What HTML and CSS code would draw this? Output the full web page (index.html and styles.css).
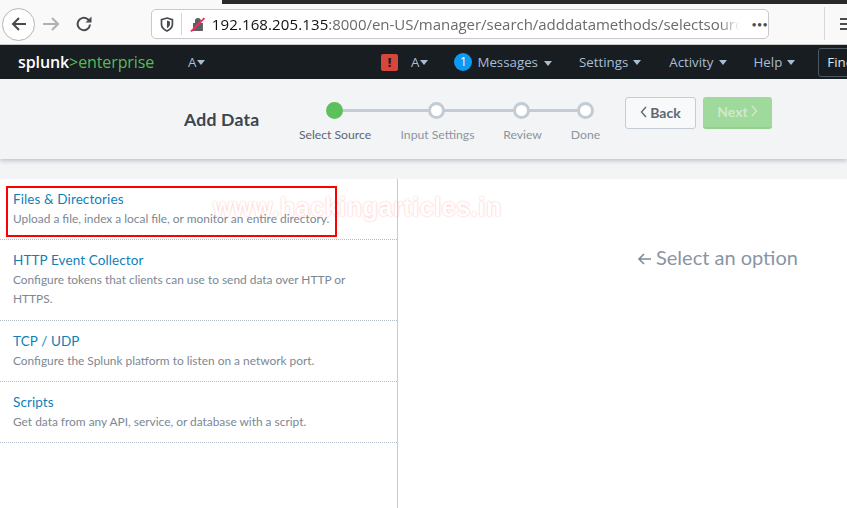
FILE: index.html
```html
<!DOCTYPE html>
<html lang="en">
<head>
<meta charset="utf-8">
<title>Add Data</title>
<link rel="stylesheet" href="styles.css">
</head>
<body>
<div class="topstrip"><div class="strip-dark"></div></div>
<header class="browser">
  <div class="circle-btn">
    <svg width="20" height="20" viewBox="0 0 20 20"><path d="M17 10H4M10 4l-6 6 6 6" fill="none" stroke="#4a4a4f" stroke-width="2"/></svg>
  </div>
  <svg class="fwd" width="18" height="18" viewBox="0 0 18 18"><path d="M1 9h15M10 3l6 6-6 6" fill="none" stroke="#b1b1b3" stroke-width="2"/></svg>
  <svg class="reload" width="18" height="18" viewBox="0 0 18 18"><path d="M15 9.500A6.200 6.200 0 1 1 12.800 4.200L15 6" fill="none" stroke="#4a4a4f" stroke-width="2"/><path d="M16.500 1.500v6h-6z" fill="#4a4a4f"/></svg>
  <div class="urlbar">
    <svg class="shield" width="14" height="15" viewBox="0 0 14 15"><path d="M7 1l5.500 1.600v5c0 3-2.400 5-5.500 6.400C3.900 12.600 1.500 10.600 1.500 7.600v-5z" fill="none" stroke="#4a4a4f" stroke-width="1.700"/><path d="M7 3.500l3 1v3c0 1.600-1.300 2.800-3 3.700z" fill="#4a4a4f"/></svg>
    <span class="url-sep"></span>
    <svg class="lock" width="16" height="16" viewBox="0 0 16 16"><path d="M5 7V5a3 3 0 0 1 6 0v2h2v8H3V7z" fill="#5f5f63"/><path d="M1 15.500L14.500 2" stroke="#ff2a55" stroke-width="1.800"/></svg>
    <div class="url"><span class="host">192.168.205.135</span>:8000/en-US/manager/search/adddatamethods/selectsource</div>
    <span class="dots">•••</span>
  </div>
  <span class="tool-sep"></span>
  <div class="burger"><i></i><i></i><i></i></div>
</header>
<nav class="splunkbar">
  <div class="brand">splunk<span class="brand-green">&gt;enterprise</span></div>
  <span class="nav-a app">A<b class="caret"></b></span>
  <div class="nav-right">
    <span class="alert">!</span>
    <span class="nav-a">A<b class="caret"></b></span>
    <span class="nav-item msg"><span class="badge">1</span>Messages<b class="caret"></b></span>
    <span class="nav-item">Settings<b class="caret"></b></span>
    <span class="nav-item activity">Activity<b class="caret"></b></span>
    <span class="nav-item">Help<b class="caret"></b></span>
    <span class="find">Find</span>
  </div>
</nav>
<section class="wizard">
  <h1>Add Data</h1>
  <div class="steps">
    <div class="step active"><span class="dot"></span><span class="label">Select Source</span></div>
    <div class="step s2"><span class="dot"></span><span class="label">Input Settings</span></div>
    <div class="step s3"><span class="dot"></span><span class="label">Review</span></div>
    <div class="step s4"><span class="dot"></span><span class="label">Done</span></div>
  </div>
  <div class="buttons">
    <span class="btn back"><svg width="7" height="12" viewBox="0 0 7 12"><path d="M6 1L1.500 6 6 11" fill="none" stroke="#5c6773" stroke-width="1.400"/></svg>Back</span>
    <span class="btn next">Next<svg width="7" height="12" viewBox="0 0 7 12"><path d="M1 1l4.500 5L1 11" fill="none" stroke="#cfe9cc" stroke-width="1.400"/></svg></span>
  </div>
</section>
<main class="content">
  <div class="methods">
    <div class="method m1"><a>Files &amp; Directories</a><p>Upload a file, index a local file, or monitor an entire directory.</p></div>
    <div class="method m2"><a>HTTP Event Collector</a><p>Configure tokens that clients can use to send data over HTTP or HTTPS.</p></div>
    <div class="method m3"><a>TCP / UDP</a><p>Configure the Splunk platform to listen on a network port.</p></div>
    <div class="method m4"><a>Scripts</a><p>Get data from any API, service, or database with a script.</p></div>
  </div>
  <div class="detail"><span class="hint"><svg class="hint-arrow" width="14" height="12" viewBox="0 0 14 12"><path d="M14 6H2M7 1L2 6l5 5" fill="none" stroke="#7f8a98" stroke-width="1.600"/></svg>Select an option</span></div>
  <div class="redbox"></div>
  <div class="watermark">www.hackingarticles.in</div>
</main>
</body>
</html>
```
FILE: styles.css
```css
* { box-sizing: border-box; }
html, body { margin: 0; padding: 0; }
body { width: 847px; height: 508px; overflow: hidden; background: #fff; font-family: Lato, "Liberation Sans", sans-serif; position: relative; }
.topstrip { height: 4px; background: #f9f9fa; }
.strip-dark { height: 4px; width: 625px; margin-left: 222px; background: #2b2a2a; }
.browser { height: 41px; background: #f9f9fa; border-bottom: 1px solid #c8c8c8; display: flex; align-items: center; position: relative; padding-left: 2px; }
.circle-btn { width: 33px; height: 33px; border: 1px solid #b5b5b7; border-radius: 50%; display: flex; align-items: center; justify-content: center; background: #fff; }
.fwd { margin-left: 7px; }
.reload { margin-left: 15px; }
.urlbar { position: absolute; left: 151px; top: 5px; width: 618px; height: 30px; background: #fff; border: 1px solid #c9c9cb; border-radius: 5px; display: flex; align-items: center; }
.shield { margin-left: 8px; }
.url-sep { width: 1px; height: 22px; background: #d4d4d6; margin-left: 7px; }
.lock { margin-left: 8px; }
.url { margin-left: 6px; width: 532px; overflow: hidden; white-space: nowrap; font-family: "Open Sans", sans-serif; font-size: 15px; color: #6a6a6f; letter-spacing: -.03px; -webkit-mask-image: linear-gradient(to right,#000 96%,transparent); mask-image: linear-gradient(to right,#000 96%,transparent); }
.host { color: #111; letter-spacing: .12px; }
.dots { margin-left: 11px; font-size: 9px; color: #4a4a4f; letter-spacing: .3px; }
.tool-sep { position: absolute; left: 824px; top: 3px; width: 1px; height: 33px; background: #d8d8da; }
.burger { position: absolute; left: 840px; top: 14px; width: 10px; }
.burger i { display: block; height: 2px; background: #4a4a4f; margin-bottom: 3px; }
.splunkbar { height: 34px; background: #171d21; display: flex; align-items: center; position: relative; color: #a9bdd3; font-family: "Open Sans", sans-serif; font-size: 13.300px; }
.brand { margin-left: 18px; width: 170px; font-family: "Open Sans", sans-serif; font-size: 16px; color: #fff; letter-spacing: -.1px; font-weight: 600; }
.brand-green { color: #5cb85c; font-weight: 400; }
.caret { display: inline-block; width: 0; height: 0; border: 4px solid transparent; border-top: 5px solid #a9bdd3; border-bottom: 0; margin-left: 5px; vertical-align: 2px; }
.nav-a .caret { margin-left: 1px; }
.nav-right { position: absolute; left: 381px; top: 0; height: 34px; display: flex; align-items: center; white-space: nowrap; }
.alert { width: 17px; height: 17px; background: #d6463d; border-radius: 2px; color: #171d21; font-weight: 800; font-size: 12px; text-align: center; line-height: 17px; margin-right: 13px; }
.nav-item { margin-left: 27px; }
.nav-item.msg { margin-left: 26px; display: flex; align-items: center; }
.nav-item.activity { margin-left: 28px; }
.msg .caret { margin-left: 6px; margin-top: 2px; }
.badge { width: 18px; height: 18px; border-radius: 50%; background: #0d9bf2; color: #fff; text-align: center; line-height: 18px; margin-right: 5px; font-size: 12px; }
.find { margin-left: 23px; width: 40px; height: 29px; border: 1px solid #4d5963; border-radius: 3px; padding-left: 8px; line-height: 27px; color: #dfe6ee; }
.wizard { height: 80px; background: #f2f4f5; box-shadow: 0 2px 4px rgba(60,80,100,.28); position: relative; z-index: 1; display: flex; }
h1 { margin: 30px 0 0 184px; font-size: 17.600px; line-height: 22px; font-weight: 700; color: #3c444d; letter-spacing: .2px; }
.steps { position: absolute; left: 0; top: 0; width: 640px; height: 80px; }
.steps::before { content: ""; position: absolute; left: 334px; width: 251px; top: 30px; height: 3px; background: #c3cbd4; }
.step { position: absolute; top: 23px; width: 100px; margin-left: -50px; display: flex; flex-direction: column; align-items: center; }
.step.active { left: 334px; }
.s2 { left: 436px; }
.s3 { left: 521px; }
.s4 { left: 585px; }
.dot { width: 17px; height: 17px; border-radius: 50%; border: 3px solid #c3cbd4; background: #fff; position: relative; }
.active .dot { background: #5cc05c; border-color: #5cc05c; }
.label { margin: 8px 0 0 3px; font-size: 12.200px; line-height: 16px; color: #8c95a0; white-space: nowrap; }
.s4 .label { margin-left: 1px; }
.active .label { color: #5c6773; margin-left: 2px; }
.buttons { position: absolute; left: 625px; top: 18px; display: flex; gap: 7px; }
.btn { height: 32px; border-radius: 3px; font-size: 14px; font-weight: 700; display: flex; align-items: center; justify-content: center; gap: 3px; padding-bottom: 2px; }
.back { width: 71px; background: #f7f9fa; border: 1px solid #c3cbd4; color: #5c6773; }
.next { width: 69px; background: #9fd99b; border-bottom: 2px solid #94cf90; color: #cfe9cc; }
.content { position: relative; height: 349px; display: flex; background: #fff; padding-top: 20px; }
.content::before { content: ""; position: absolute; left: 0; right: 0; top: 0; height: 20px; background: #f2f4f5; }
.methods { width: 398px; border-right: 1px solid #c3cbd4; height: 330px; position: relative; z-index: 2; }
.method { padding: 10px 13px 0; border-bottom: 1px dotted #b3bdc9; }
.m1 { height: 61px; }
.m2 { height: 81px; }
.m3 { height: 61px; }
.m4 { height: 61px; }
.method a { display: block; font-size: 13.500px; line-height: 20px; color: #0f7fb8; letter-spacing: .1px; }
.method p { margin: 0; font-size: 11.900px; line-height: 19px; color: #7c8794; }
.detail { flex: 1; padding: 66px 0 0 239px; }
.hint { font-size: 20px; line-height: 24px; color: #8a95a3; white-space: nowrap; }
.hint-arrow { margin-right: 5px; }
.redbox { position: absolute; left: 6px; top: 27px; width: 331px; height: 51px; border: 2px solid #f00; z-index: 3; }
.watermark { position: absolute; left: 213px; top: 32px; font-size: 25px; line-height: 32px; font-weight: 700; font-family: "Liberation Sans", sans-serif; color: #fff; text-shadow: 0 0 2px rgba(255,70,70,.45); white-space: nowrap; letter-spacing: .6px; z-index: 1; }
```
